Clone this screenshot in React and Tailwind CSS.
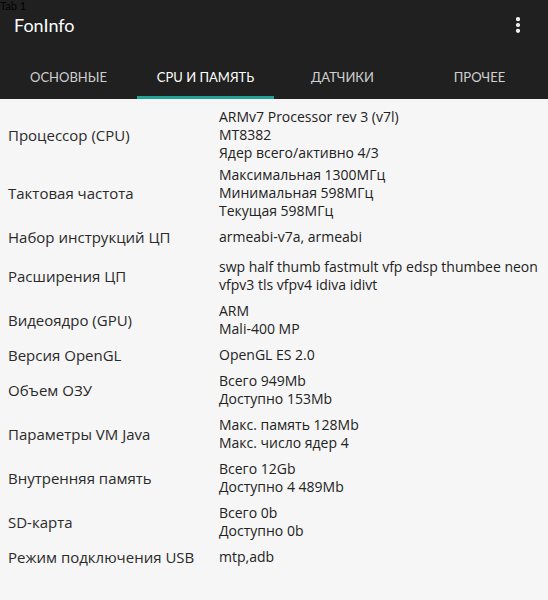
import { MoreVertical } from 'lucide-react';

const tabs = ['Основные', 'CPU и память', 'Датчики', 'Прочее'];

const rows = [
  { label: 'Процессор (CPU)', values: ['ARMv7 Processor rev 3 (v7l)', 'MT8382', 'Ядер всего/активно 4/3'], cls: 'pt-[9px] pb-0' },
  { label: 'Тактовая частота', values: ['Максимальная 1300МГц', 'Минимальная 598МГц', 'Текущая 598МГц'] },
  { label: 'Набор инструкций ЦП', values: ['armeabi-v7a, armeabi'], cls: 'pt-1 pb-2' },
  { label: 'Расширения ЦП', values: ['swp half thumb fastmult vfp edsp thumbee neon', 'vfpv3 tls vfpv4 idiva idivt'] },
  { label: 'Видеоядро (GPU)', values: ['ARM', 'Mali-400 MP'] },
  { label: 'Версия OpenGL', values: ['OpenGL ES 2.0'] },
  { label: 'Объем ОЗУ', values: ['Всего 949Mb', 'Доступно 153Mb'] },
  { label: 'Параметры VM Java', values: ['Макс. память 128Mb', 'Макс. число ядер 4'] },
  { label: 'Внутренняя память', values: ['Всего 12Gb', 'Доступно 4 489Mb'] },
  { label: 'SD-карта', values: ['Всего 0b', 'Доступно 0b'] },
  { label: 'Режим подключения USB', values: ['mtp,adb'] },
];

const Row = ({ label, values, cls }) => (
  <div className={`flex items-center font-['Open_Sans',sans-serif] ${cls || 'py-1'}`}>
    <div className="w-[219px] shrink-0 pl-2 text-[15px] leading-[18px] text-[#2a2a2a]">{label}</div>
    <div className="flex flex-col text-[14px] leading-[18px] text-[#222]">
      {values.map((v) => (
        <span key={v}>{v}</span>
      ))}
    </div>
  </div>
);

export default function App() {
  return (
    <div className="relative min-h-[600px] bg-[#f6f6f6] font-['Lato',sans-serif]">
      <span className="absolute left-0 top-0 text-[11px] leading-[11px] text-black">Tab 1</span>

      {/* шапка */}
      <div className="bg-[#202020]">
        <div className="flex h-[50px] items-center justify-between pl-[14px] pr-[20px]">
          <h1 className="text-[18px] text-white">FonInfo</h1>
          <MoreVertical className="size-5 text-white" strokeWidth={3} />
        </div>
        <div className="grid grid-cols-4">
          {tabs.map((t, i) => (
            <div key={t} className="flex h-[49px] flex-col items-center justify-between">
              <span className={`pt-[18px] text-[13px] uppercase ${i === 1 ? 'text-white' : 'text-[#cfcfcf]'}`}>{t}</span>
              <div className={`h-[3px] w-full ${i === 1 ? 'bg-[#1fa394]' : ''}`} />
            </div>
          ))}
        </div>
      </div>

      {/* список */}
      <div className="flex flex-col">
        {rows.map((r) => (
          <Row key={r.label} {...r} />
        ))}
      </div>
    </div>
  );
}
